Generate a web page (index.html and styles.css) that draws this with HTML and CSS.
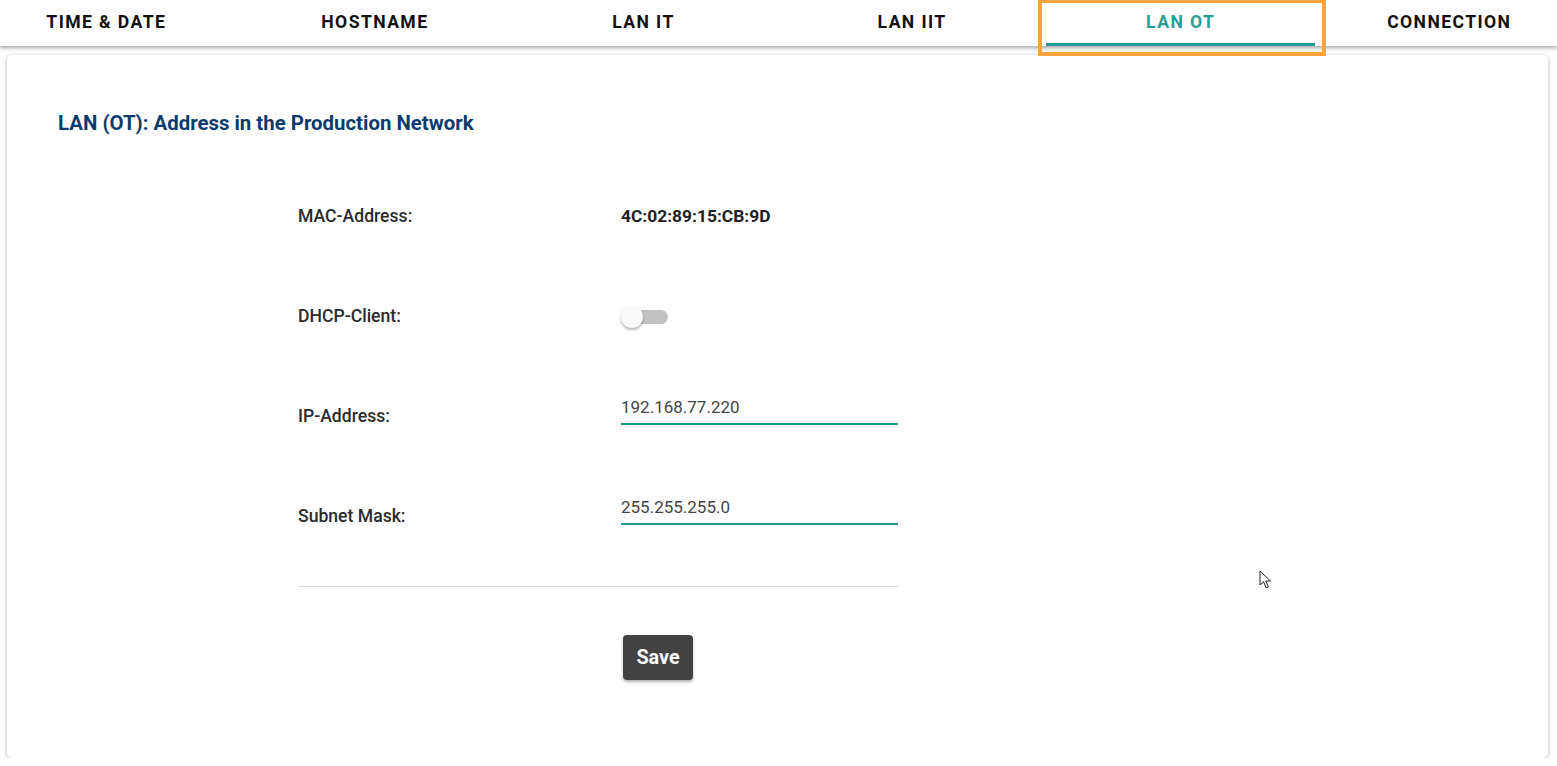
FILE: index.html
```html
<!DOCTYPE html>
<html lang="en">
<head>
    <meta charset="UTF-8">
    <meta name="viewport" content="width=device-width, initial-scale=1.0">
    <title>LAN OT Settings</title>
    <link rel="stylesheet" href="styles.css">
</head>
<body>
    <nav class="tab-bar">
        <div class="tabs">
            <button class="tab-btn">Time &amp; Date</button>
            <button class="tab-btn">Hostname</button>
            <button class="tab-btn">LAN IT</button>
            <button class="tab-btn">LAN IIT</button>
            <button class="tab-btn active">LAN OT</button>
            <button class="tab-btn">Connection</button>
        </div>
    </nav>

    <div class="highlight"></div>

    <main class="card">
        <h2 class="card-title">LAN (OT): Address in the Production Network</h2>

        <div class="form">
            <div class="row">
                <span class="label">MAC-Address:</span>
                <span class="value">4C:02:89:15:CB:9D</span>
            </div>
            <div class="row">
                <span class="label">DHCP-Client:</span>
                <label class="toggle">
                    <span class="track"></span>
                    <span class="thumb"></span>
                </label>
            </div>
            <div class="row">
                <span class="label">IP-Address:</span>
                <input class="field" type="text" value="192.168.77.220">
            </div>
            <div class="row">
                <span class="label">Subnet Mask:</span>
                <input class="field" type="text" value="255.255.255.0">
            </div>
            <hr class="divider">
            <div class="actions">
                <button class="save-btn">Save</button>
            </div>
        </div>
    </main>

    <svg class="cursor" width="14" height="20" viewBox="0 0 14 20">
        <path d="M1 1 L1 15 L4.5 11.8 L7.2 18 L9.4 17 L6.8 11 L11.5 11 Z" fill="#fff" stroke="#222" stroke-width="1" stroke-linejoin="round"/>
    </svg>
</body>
</html>
```

FILE: styles.css
```css
body {
    font-family: Roboto, "Noto Sans", Arial, sans-serif;
    margin: 0;
    padding: 0;
    background-color: #fff;
    color: #222;
    overflow: hidden;
}

.tab-bar {
    height: 46px;
    background-color: #fff;
    box-shadow: 0 2px 4px rgba(0, 0, 0, 0.35);
    overflow: hidden;
    position: relative;
    z-index: 2;
}

.tabs {
    display: flex;
    margin-left: -28px;
}

.tab-btn {
    flex: 0 0 268.6px;
    height: 46px;
    padding: 1px 0 0;
    background: transparent;
    border: none;
    border-bottom: 3px solid transparent;
    font-family: Roboto, Arial, sans-serif;
    font-size: 17.6px;
    font-weight: 700;
    letter-spacing: 1.4px;
    text-transform: uppercase;
    color: #111;
    cursor: pointer;
}

.tab-btn.active {
    color: #2a9d97;
    border-bottom-color: #1f9a90;
}

.highlight {
    position: absolute;
    left: 1038px;
    top: 0;
    width: 280px;
    height: 49px;
    border: 4px solid #f8a440;
    border-top-width: 3px;
    z-index: 3;
}

.card {
    margin: 9px 9px 0 7px;
    height: 703px;
    box-sizing: border-box;
    padding: 55px 51px 0;
    background-color: #fff;
    border-radius: 5px;
    box-shadow: 0 1px 4px rgba(0, 0, 0, 0.3);
}

.card-title {
    margin: 0;
    font-size: 20.4px;
    line-height: 26px;
    font-weight: 700;
    color: #0b3b6d;
}

.form {
    width: 600px;
    margin: 30px 0 0 240px;
}

.row {
    display: grid;
    grid-template-columns: 323px 277px;
    align-items: center;
    height: 100px;
}

.label {
    font-size: 17.6px;
    font-weight: 500;
    color: #2b2b2b;
}

.value {
    font-size: 17.4px;
    font-weight: 700;
    color: #222;
}

.toggle {
    position: relative;
    display: block;
    width: 48px;
    height: 22px;
    margin-top: 2px;
}

.track {
    position: absolute;
    left: 3px;
    top: 4px;
    width: 44px;
    height: 14px;
    border-radius: 7px;
    background-color: #c2c2c2;
}

.thumb {
    position: absolute;
    left: 0;
    top: 0;
    width: 22px;
    height: 22px;
    border-radius: 50%;
    background-color: #fafafa;
    box-shadow: 0 2px 3px rgba(0, 0, 0, 0.3);
}

.field {
    box-sizing: border-box;
    width: 277px;
    height: 34px;
    margin-bottom: 16px;
    padding: 0;
    border: none;
    border-bottom: 2px solid #1f9a90;
    font-family: Roboto, Arial, sans-serif;
    font-size: 17px;
    color: #444;
    outline: none;
    background: transparent;
}

.divider {
    margin: 20px 0 0;
    border: none;
    border-top: 1px solid #dcdcdc;
}

.actions {
    padding: 48px 0 0 325px;
}

.save-btn {
    width: 70px;
    height: 45px;
    background-color: #424242;
    color: #fff;
    border: none;
    border-radius: 4px;
    font-family: Roboto, Arial, sans-serif;
    font-size: 19.8px;
    font-weight: 700;
    box-shadow: 0 2px 3px rgba(0, 0, 0, 0.3);
    cursor: pointer;
}

.cursor {
    position: absolute;
    left: 1259px;
    top: 570px;
}
```
